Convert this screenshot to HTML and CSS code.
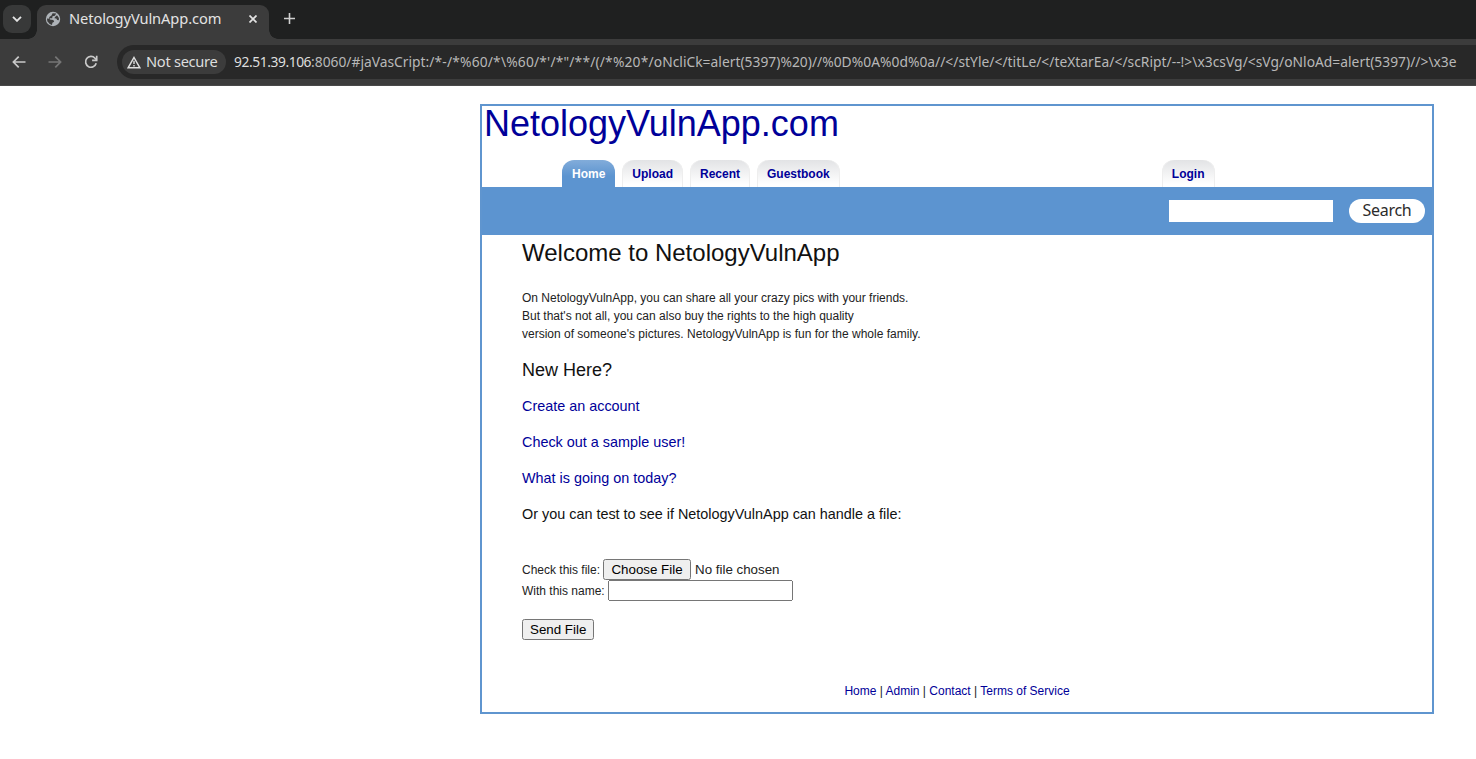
FILE: index.html
```html
<!DOCTYPE html>
<html lang="en">
<head>
<meta charset="utf-8">
<title>NetologyVulnApp.com</title>
<link rel="stylesheet" href="styles.css">
</head>
<body>
<header class="browser">
  <div class="tabstrip">
    <div class="tab-search"><svg width="10" height="6" viewBox="0 0 10 6"><path d="M1 .8 5 4.8 9 .8" fill="none" stroke="#e3e3e3" stroke-width="1.9"/></svg></div>
    <div class="tab">
      <svg class="globe" width="16" height="16" viewBox="0 0 16 16"><circle cx="8" cy="8" r="7.2" fill="#aeb3b8"/><path d="M7.600 2.300 11.200 2.600 9.900 4.700 7.500 5.200 7.200 7.200 5 7.300 4.800 8.600 8.300 8.900 9.200 10.700 7.400 11.700 7 13.900 4.700 13 2.300 10.300 2 7.600 4.200 7.700 4.300 6 6.500 4.500Z" fill="#3c3c3c"/><path d="M12 4.300 13.900 7 13.800 9.300 12.200 9.100 11.300 7.600 9.400 7.300 10 5.900Z" fill="#3c3c3c"/></svg>
      <span class="tab-title">NetologyVulnApp.com</span>
      <svg class="close" width="8" height="8" viewBox="0 0 8 8"><path d="m.5.5 7 7m0-7-7 7" stroke="#e3e3e3" stroke-width="1.7"/></svg>
    </div>
    <svg class="new-tab" width="11" height="11" viewBox="0 0 11 11"><path d="M5.500 0v11M0 5.500h11" stroke="#d0d0d0" stroke-width="1.600"/></svg>
  </div>
  <div class="toolbar">
    <svg class="nav" width="14" height="12" viewBox="0 0 14 12"><path d="M13.500 6H1.500M6.700.7 1.400 6l5.300 5.300" fill="none" stroke="#c9c9c9" stroke-width="1.700"/></svg>
    <svg class="nav" width="14" height="12" viewBox="0 0 14 12"><path d="M.5 6h12M7.300.7 12.600 6l-5.300 5.300" fill="none" stroke="#767676" stroke-width="1.700"/></svg>
    <svg class="nav" width="14" height="14" viewBox="0 0 14 14"><path d="M12.200 8.300A5.400 5.400 0 1 1 11 3.200L12.700 5" fill="none" stroke="#c9c9c9" stroke-width="1.700"/><path d="M12.700.8v4.600H8.100" fill="none" stroke="#c9c9c9" stroke-width="1.700"/></svg>
    <div class="omnibox">
      <div class="security"><svg width="14" height="13" viewBox="0 0 14 13"><path d="M7 1.500 12.800 11.700H1.200Z" fill="none" stroke="#dedede" stroke-width="1.500"/><path d="M7 4.800v3.300M7 9v1.400" stroke="#dedede" stroke-width="1.400"/></svg><span class="security-label">Not secure</span></div>
      <span class="url"><span class="host">92.51.39.106</span>:8060/#jaVasCript:<span class="symbols">/*-/*%60/*\%60/*'/*"/**/(/*%20*/</span><span class="query">oNcliCk=alert(5397)%20)//%0D%0A%0d%0a//&lt;/stYle/&lt;/titLe/&lt;/teXtarEa/&lt;/scRipt/--!&gt;\x3csVg/&lt;sVg/oNloAd=alert(5397)//&gt;\x3e</span></span>
    </div>
  </div>
</header>
<main class="container">
  <h1 class="site-title"><a href="#">NetologyVulnApp.com</a></h1>
  <nav class="menu">
    <a class="menu-tab current" href="#">Home</a>
    <a class="menu-tab" href="#">Upload</a>
    <a class="menu-tab" href="#">Recent</a>
    <a class="menu-tab" href="#">Guestbook</a>
    <a class="menu-tab login" href="#">Login</a>
  </nav>
  <form class="search-bar"><input class="search-input" type="text"><button class="search-button" type="button">Search</button></form>
  <section class="content">
    <h2>Welcome to NetologyVulnApp</h2>
    <p>On NetologyVulnApp, you can share all your crazy pics with your friends.<br>But that's not all, you can also buy the rights to the high quality<br>version of someone's pictures. NetologyVulnApp is fun for the whole family.</p>
    <h3>New Here?</h3>
    <h4><a href="#">Create an account</a></h4>
    <h4><a href="#">Check out a sample user!</a></h4>
    <h4><a href="#">What is going on today?</a></h4>
    <h4>Or you can test to see if NetologyVulnApp can handle a file:</h4>
    <form class="upload">
      <label class="row">Check this file:<input class="file" type="file"></label>
      <label class="row">With this name:<input class="name" type="text"></label>
      <input class="send" type="button" value="Send File">
    </form>
  </section>
  <footer class="footer"><a href="#">Home</a> | <a href="#">Admin</a> | <a href="#">Contact</a> | <a href="#">Terms of Service</a></footer>
</main>
</body>
</html>
```
FILE: styles.css
```css
* { box-sizing: border-box; }
body { margin: 0; background: #fff; color: #222; font: 12px/18px "Liberation Sans", Arial, sans-serif; overflow: hidden; }
a { color: #009; text-decoration: none; }
h1, h2, h3, h4, p { margin: 0; font-weight: normal; }
svg { display: block; flex: none; }

.browser { height: 86px; background: #3c3c3c; font-family: "Noto Sans", sans-serif; border-bottom: 1px solid #494949; }
.tabstrip { display: flex; height: 39px; background: #1f2020; padding: 5px 0 0 3px; }
.tab-search { width: 28px; height: 28px; border-radius: 9px; background: #383939; display: grid; place-items: center; }
.tab { position: relative; display: flex; align-items: center; width: 232px; height: 34px; margin-left: 6px; padding: 0 12px 6px 8px; border-radius: 9px 9px 0 0; background: #3c3c3c; }
.tab::before, .tab::after { content: ""; position: absolute; bottom: 0; width: 9px; height: 9px; }
.tab::before { left: -9px; background: radial-gradient(circle at 0 0, transparent 8.5px, #3c3c3c 9px); }
.tab::after { right: -9px; background: radial-gradient(circle at 100% 0, transparent 8.5px, #3c3c3c 9px); }
.tab-title { margin: 0 0 2px 8px; color: #e3e3e3; font-size: 14.67px; letter-spacing: -.1px; line-height: 20px; white-space: nowrap; }
.close { margin-left: auto; }
.new-tab { margin: 8px 0 0 15px; }
.toolbar { display: flex; align-items: center; height: 46px; padding-left: 12px; gap: 22px; }
.omnibox { display: flex; align-items: center; flex: 1; height: 34px; margin-left: -3px; padding-left: 5px; border-radius: 17px 0 0 17px; background: #282828; }
.security { display: flex; align-items: center; gap: 5px; width: 104px; height: 24px; padding-left: 5px; border-radius: 12px; background: #3c3c3c; color: #dedede; font-size: 14.67px; white-space: nowrap; }
.security-label { letter-spacing: -.3px; margin-bottom: 2px; }
.url { margin-left: 8px; color: #b8b8b8; font-size: 13.8px; line-height: 20px; white-space: nowrap; }
.host { color: #dedede; letter-spacing: -.42px; }
.symbols { letter-spacing: .18px; }
.query { letter-spacing: .025px; }

.container { display: flex; flex-direction: column; width: 954px; height: 610px; margin: 18px 0 0 480px; border: 2px solid #5f95cf; }
.site-title { height: 54px; padding-left: 2px; font-size: 36px; line-height: 36px; }
.menu { display: flex; gap: 7px; height: 27px; padding-left: 80px; }
.menu-tab { height: 27px; padding: 5px 10px 0; border-radius: 12px 12px 0 0; background: linear-gradient(#e2e3e5, #fff 90%); box-shadow: inset 1px 0 #eee, inset -1px 0 #eee; font-weight: bold; }
.menu-tab.current { background: linear-gradient(#82acda, #5c94d0 60%); box-shadow: none; color: #fff; }
.login { margin: 0 217.5px 0 auto; }
.search-bar { display: flex; align-items: center; justify-content: flex-end; gap: 16px; height: 48px; padding-right: 7px; background: #5c94d0; }
.search-input { width: 164px; height: 22px; border: 0; background: #fff; }
.search-button { width: 76px; height: 24px; padding: 0; border: 0; border-radius: 12px; background: #fff; color: #2b2b2b; font: 16px/22px "Noto Sans", sans-serif; letter-spacing: -.3px; padding-bottom: 2px; }
.content { padding-left: 40px; color: #222; }
.content h2, .content h3, .content h4 { color: #111; }
.content h2 { font-size: 24px; line-height: 36px; margin-bottom: 18px; }
.content p { margin-bottom: 18px; }
.content h3 { font-size: 18px; line-height: 18px; margin-bottom: 18px; }
.content h4 { font-size: 14.4px; line-height: 18px; margin-bottom: 18px; }
.upload { margin-top: 36px; }
.row { display: flex; align-items: center; gap: 3px; height: 21px; }
.row input, .send { font: 13.333px "Liberation Sans", Arial, sans-serif; }
.file { height: 21px; color: #222; }
.file::file-selector-button { width: 88px; }
.name { width: 185px; height: 21px; }
.send { width: 72px; height: 21px; margin-top: 18px; padding: 1px 6px; display: block; }
.footer { margin-top: auto; margin-bottom: 12px; text-align: center; }
```
